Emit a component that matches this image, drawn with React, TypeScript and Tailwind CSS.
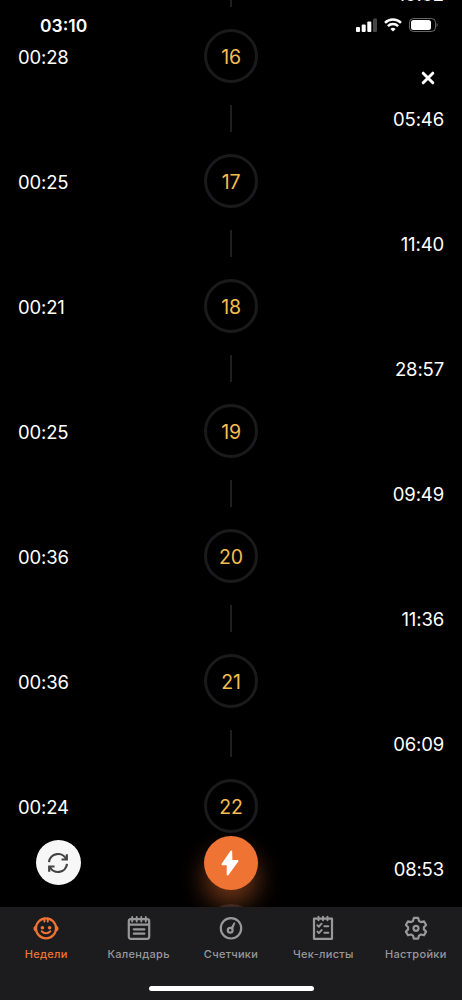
import type { ReactElement, ReactNode } from 'react'
import { clsx } from 'clsx'

interface Contraction {
  id: number
  duration: string
  interval: string
}

const contractions: Contraction[] = [
  { id: 16, duration: '00:28', interval: '05:46' },
  { id: 17, duration: '00:25', interval: '11:40' },
  { id: 18, duration: '00:21', interval: '28:57' },
  { id: 19, duration: '00:25', interval: '09:49' },
  { id: 20, duration: '00:36', interval: '11:36' },
  { id: 21, duration: '00:36', interval: '06:09' },
  { id: 22, duration: '00:24', interval: '08:53' },
]

function Interval({ value }: { value: string }): ReactElement {
  return (
    <div className="grid h-[62.5px] grid-cols-[1fr_54px_1fr] items-center">
      <span />
      <span className="h-[27px] w-0.5 justify-self-center bg-[#1f1f21]" />
      <span className="pt-0.5 text-right">{value}</span>
    </div>
  )
}

function Entry({ id, duration }: { id: number; duration?: string }): ReactElement {
  return (
    <div className="grid h-[62.5px] grid-cols-[1fr_54px_1fr] items-center">
      <span className="pt-[3px]">{duration}</span>
      <span className="flex size-[54px] items-center justify-center rounded-full border-[3px] border-[#1a1a1c] pt-0.5 text-[19.5px] tracking-[-0.2px] text-[#f5bd4f]">
        {id}
      </span>
    </div>
  )
}

function StatusBar(): ReactElement {
  return (
    <div className="absolute inset-x-0 top-0 flex h-[50px] items-center justify-between pr-[24px] pl-[40px]">
      <span className="pt-[2px] text-[17.5px] font-semibold">03:10</span>
      <div className="flex items-center gap-[7px]">
        <svg className="h-[14px] w-[21px]" viewBox="0 0 21 14" fill="white">
          <rect x="0" y="9" width="4" height="5" rx="1" />
          <rect x="5.7" y="6.5" width="4" height="7.5" rx="1" />
          <rect x="11.3" y="3.5" width="4" height="10.5" rx="1" />
          <rect x="17" y="0.5" width="4" height="13.5" rx="1" opacity="0.27" />
        </svg>
        <svg className="h-[14px] w-[18px]" viewBox="0 0 18 14" fill="none" stroke="white" strokeWidth="2.5">
          <path d="M1 4.9a11.4 11.4 0 0 1 16 0" />
          <path d="M3.9 8.2a7.3 7.3 0 0 1 10.2 0" />
          <path d="M9 13.5 6.4 10.9a3.8 3.8 0 0 1 5.2 0Z" fill="white" stroke="none" />
        </svg>
        <svg className="h-[14px] w-[29px]" viewBox="0 0 29 14">
          <rect x="0.5" y="0.5" width="26" height="13" rx="4" fill="none" stroke="white" strokeOpacity="0.4" />
          <rect x="2" y="2" width="20" height="10" rx="2.5" fill="white" />
          <path d="M27.6 5v4.2c1.4-.6 1.4-3.6 0-4.2Z" fill="white" opacity="0.45" />
        </svg>
      </div>
    </div>
  )
}

function TabIcon({ children }: { children: ReactNode }): ReactElement {
  return (
    <svg
      className="size-[26px]"
      viewBox="0 0 26 26"
      fill="none"
      stroke="currentColor"
      strokeWidth="2.2"
      strokeLinecap="round"
      strokeLinejoin="round"
      aria-hidden
    >
      {children}
    </svg>
  )
}

const tabs: { label: string; icon: ReactElement }[] = [
  {
    label: 'Недели',
    icon: (
      <TabIcon>
        <circle cx="13" cy="13.3" r="10" />
        <path d="M2.6 11.6c-1.4.8-1.4 3 0 3.8M23.4 11.6c1.4.8 1.4 3 0 3.8" />
        <path d="M11.4 3.6v3M14.8 3.6v3" strokeWidth="2" />
        <path d="M8.8 16.4c2 2.4 6.4 2.4 8.4 0" strokeWidth="2.1" />
        <circle cx="9.4" cy="12.7" r="1.8" fill="currentColor" stroke="none" />
        <circle cx="16.6" cy="12.7" r="1.8" fill="currentColor" stroke="none" />
      </TabIcon>
    ),
  },
  {
    label: 'Календарь',
    icon: (
      <TabIcon>
        <rect x="2.8" y="4.2" width="20.4" height="19.6" rx="2" />
        <path d="M3 9.6h20M7.8 14.3h10.6M7.8 18.7h10.6" />
        <path d="M6.2 2v4.6M10.7 2v4.6M15.3 2v4.6M19.8 2v4.6" strokeWidth="1.9" />
      </TabIcon>
    ),
  },
  {
    label: 'Счетчики',
    icon: (
      <TabIcon>
        <circle cx="13" cy="13.3" r="10.2" />
        <circle cx="12.2" cy="15.3" r="2.4" />
        <path d="m13.4 13.1 2.9-5M14.4 13.8l2-5.6" strokeWidth="1.6" />
      </TabIcon>
    ),
  },
  {
    label: 'Чек-листы',
    icon: (
      <TabIcon>
        <path d="M4 3.6h18v20.2H4z" />
        <path d="M8.5 1.8v3.4M13 1.8v3.4M17.5 1.8v3.4" strokeWidth="2" />
        <path d="m7.4 10.2 1.5 1.5 2.7-3M7.4 16.6l1.5 1.5 2.7-3M14.3 11.2h4M14.3 17.7h4" strokeWidth="2" />
      </TabIcon>
    ),
  },
  {
    label: 'Настройки',
    icon: (
      <TabIcon>
        <path d="M10.9 2.9h4.2l.9 3.1 1.9 1.1 3.1-.8 2.1 3.7-2.2 2.2v2.2l2.2 2.2-2.1 3.7-3.1-.8-1.9 1.1-.9 3.1h-4.2l-.9-3.1-1.9-1.1-3.1.8-2.1-3.7 2.2-2.2v-2.2L2.9 10 5 6.3l3.1.8L10 6Z" />
        <circle cx="13" cy="13.3" r="2.5" />
      </TabIcon>
    ),
  },
]

function TabBar(): ReactElement {
  return (
    <nav className="relative flex h-[93px] shrink-0 flex-col justify-between bg-[#1c1c1e] pb-[9px]">
      <div className="grid grid-cols-5 pt-[8px]">
        {tabs.map((tab, index) => (
          <button
            key={tab.label}
            className={clsx(
              'flex flex-col items-center gap-[5px] text-[11px] leading-4 font-medium tracking-[0.3px] whitespace-nowrap',
              index === 0 ? 'text-[#ef7434]' : 'text-[#98989b]',
            )}
          >
            {tab.icon}
            {tab.label}
          </button>
        ))}
      </div>
      <span className="h-[5px] w-[165px] self-center rounded-full bg-white" />
    </nav>
  )
}

export default function App(): ReactElement {
  return (
    <div className="relative flex h-[1000px] w-[462px] flex-col overflow-hidden bg-black font-['Inter','Liberation_Sans',sans-serif] text-white">
      <main className="min-h-0 flex-1 overflow-hidden px-[18px] text-[18.5px] tracking-[-0.15px]">
        <div className="-mt-[37.5px]">
          <Interval value="10:32" />
          {contractions.map((item) => (
            <div key={item.id}>
              <Entry id={item.id} duration={item.duration} />
              <Interval value={item.interval} />
            </div>
          ))}
          <Entry id={23} />
        </div>
      </main>

      <StatusBar />

      <button className="absolute top-[70px] right-[26px]" aria-label="Закрыть">
        <svg className="size-4" viewBox="0 0 16 16" stroke="white" strokeWidth="3" strokeLinecap="round">
          <path d="m3.2 3.2 9.6 9.6M12.8 3.2l-9.6 9.6" />
        </svg>
      </button>

      <button
        className="absolute top-[840px] left-[35.5px] flex size-[45px] items-center justify-center rounded-full bg-[#f7f7f7]"
        aria-label="Обновить"
      >
        <svg className="size-[22px]" viewBox="0 0 22 22" fill="none" stroke="#444" strokeWidth="2.2">
          <path d="M2 10.2a9.1 9.1 0 0 1 17.4-2.7M20 11.8a9.1 9.1 0 0 1-17.4 2.7" />
          <path d="M19.8 2.2v5.3h-5.3M2.2 19.8v-5.3h5.3" />
        </svg>
      </button>

      <button
        className="absolute top-[836px] left-[204px] flex size-[54px] items-center justify-center rounded-full bg-[#ef7434] shadow-[0_15px_24px_rgba(239,116,52,0.45)]"
        aria-label="Схватка"
      >
        <svg className="mr-0.5 h-[26px] w-[18px]" viewBox="0 0 18 26" fill="white" stroke="white" strokeWidth="2" strokeLinejoin="round">
          <path d="M10.2 1.6 1.5 14.2h5.3L6.7 24.4 16.5 11h-6.1Z" />
        </svg>
      </button>

      <TabBar />
    </div>
  )
}
